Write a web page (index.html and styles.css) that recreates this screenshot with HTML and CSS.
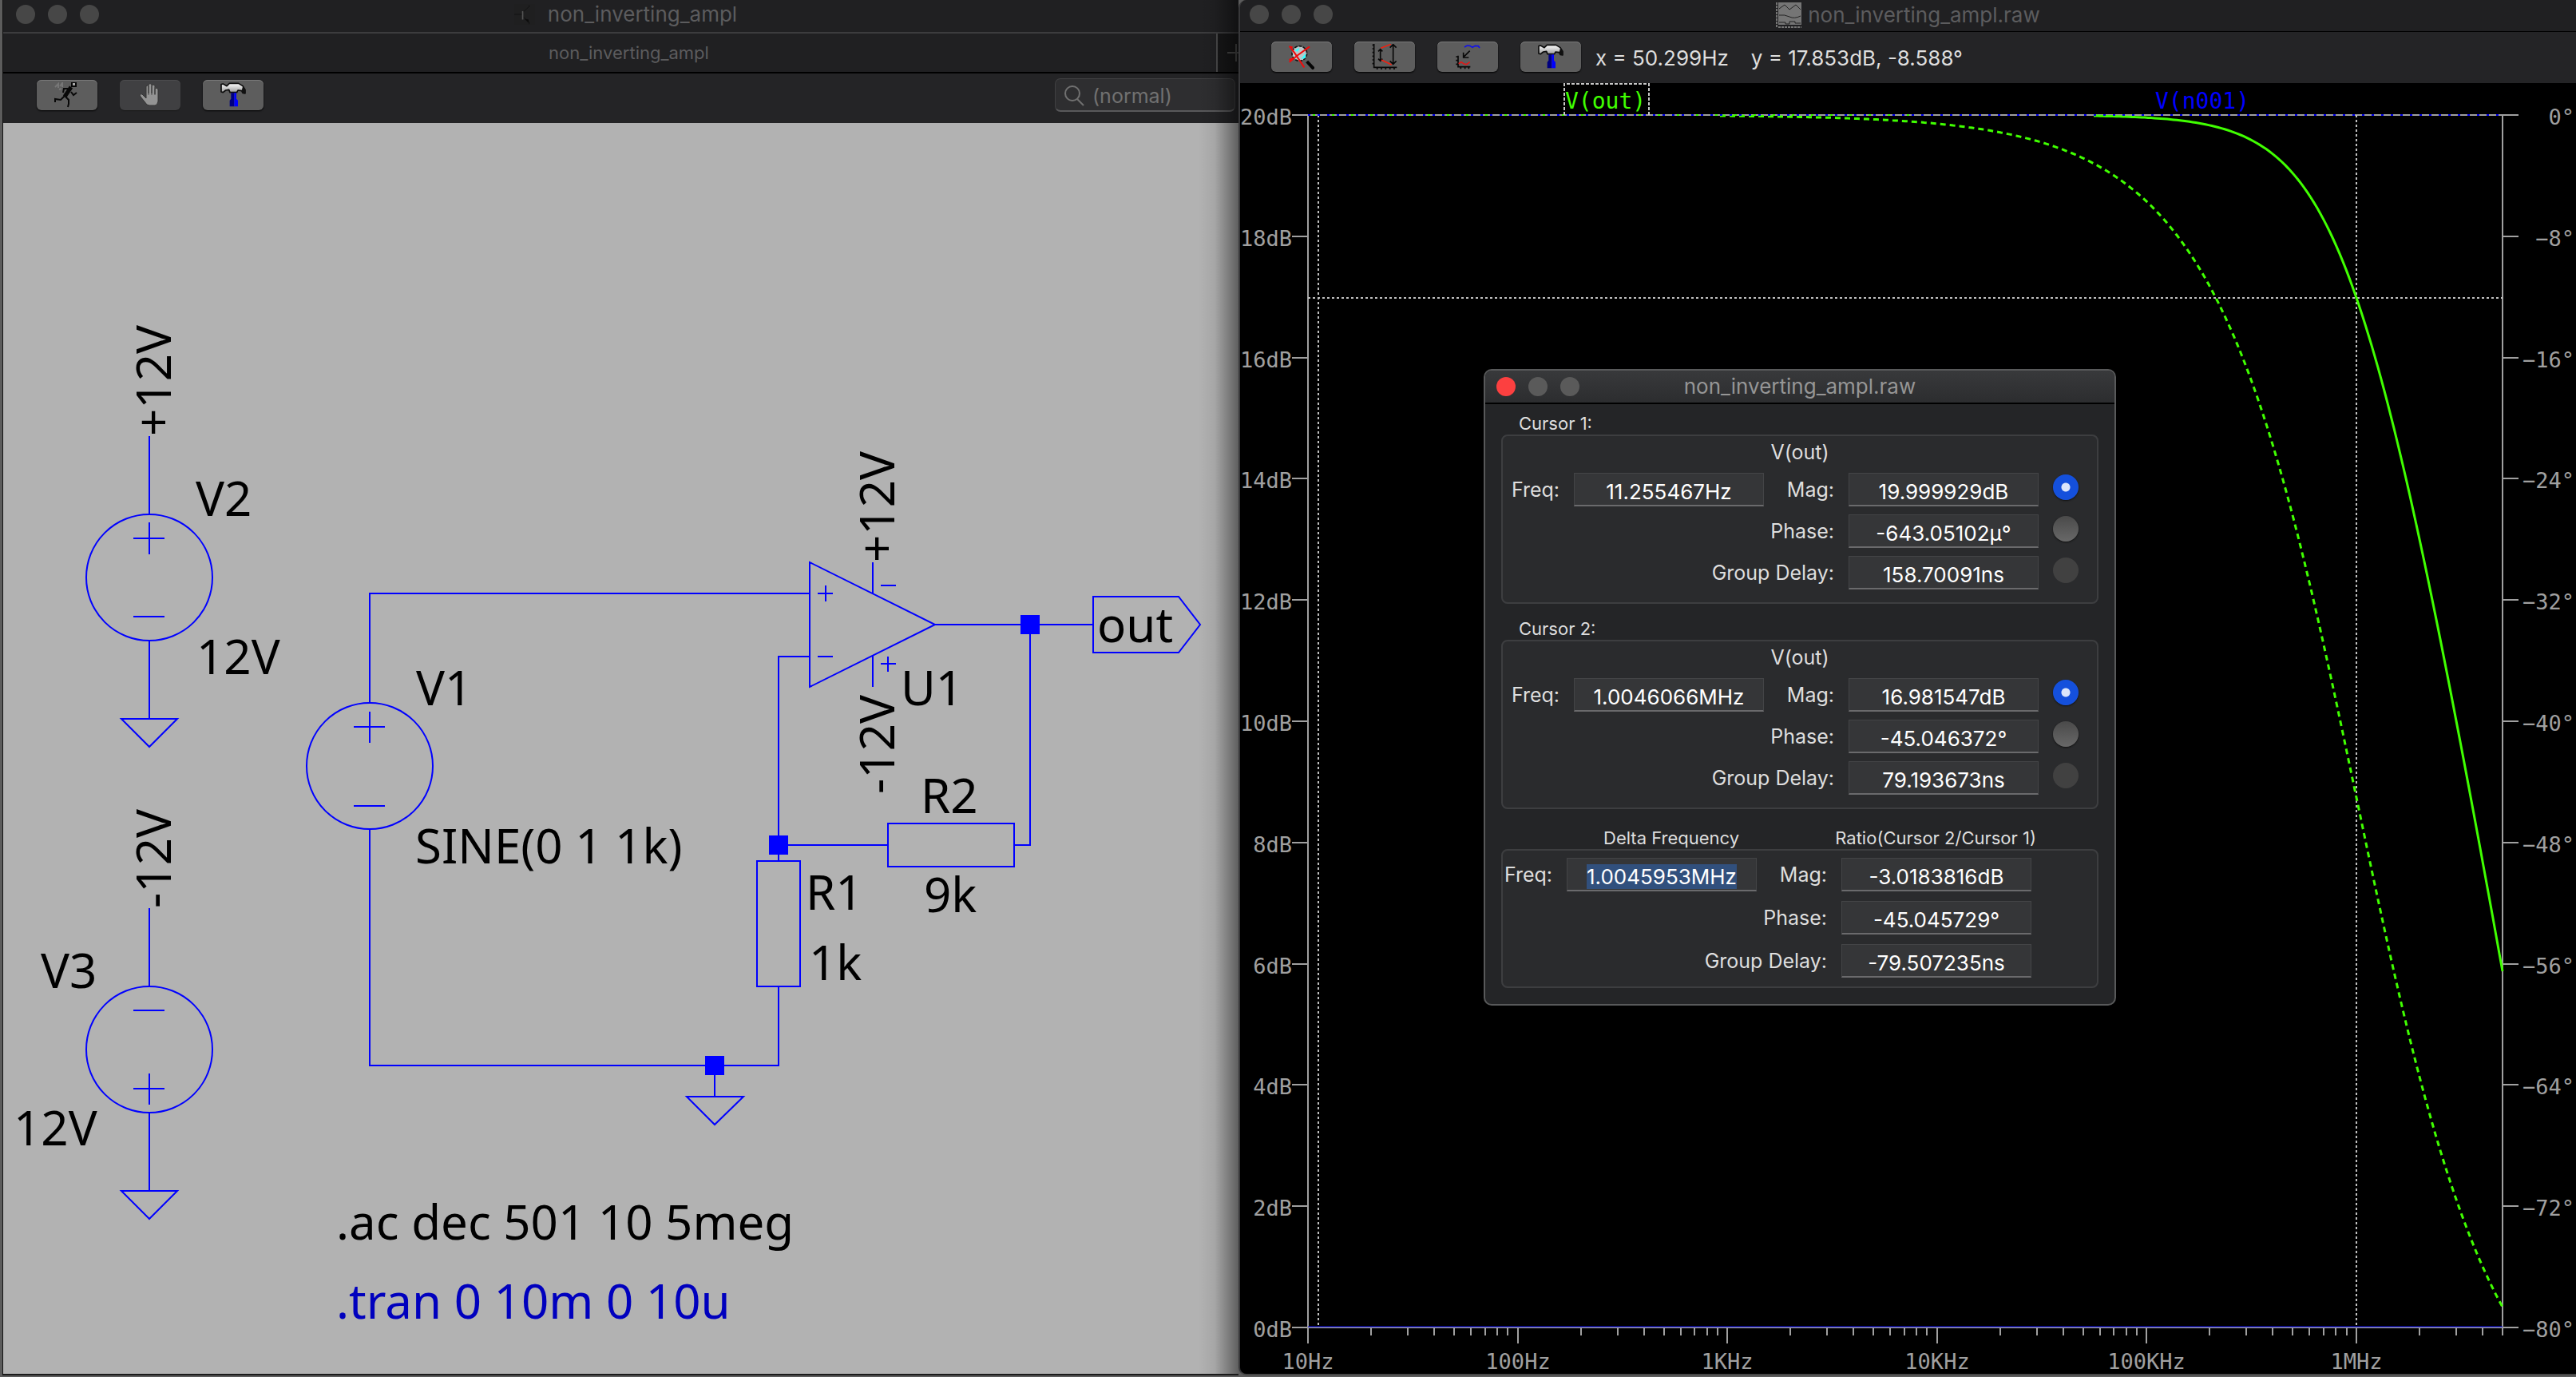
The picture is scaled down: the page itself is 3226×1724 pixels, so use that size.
FILE: index.html
```html
<!DOCTYPE html>
<html lang="en">
<head>
<meta charset="utf-8">
<title>non_inverting_ampl</title>
<link rel="stylesheet" href="styles.css">
</head>
<body>
<svg class="defs" aria-hidden="true">
  <defs>
    <linearGradient id="steel" x1="0" y1="0" x2="0" y2="1">
      <stop offset="0" stop-color="#ffffff"/><stop offset="1" stop-color="#909090"/>
    </linearGradient>
    <symbol id="icon-hammer" viewBox="0 0 96 96">
      <path d="M3 8 L10 6 L24 14 L34 4 L68 4 L84 14 L93 28 L93 42 L84 40 L80 32 L66 30 L62 38 L36 38 L32 28 L20 30 L10 38 L3 36 Z" fill="url(#steel)" stroke="#0c0c0c" stroke-width="5" stroke-linejoin="round"/>
      <path d="M84 16 L93 28 V42 L84 40 L80 32" fill="#111"/>
      <path d="M40 40 H52 V91 H35 V68 L40 62 Z" fill="#000080"/>
      <path d="M52 40 H60 V62 L66 68 V91 H52 Z" fill="#0000ff"/>
    </symbol>
  </defs>
</svg>
<main class="desktop">

  <section class="window schematic-window" aria-label="Schematic">
    <header class="titlebar">
      <div class="lights"><i></i><i></i><i></i></div>
      <svg class="doc-icon" viewBox="0 0 32 32"><rect width="32" height="32" fill="#1f1f20"/><path d="M0 16H13M23 2V4L14 12M14 20L23 28V31" fill="none" stroke="#101010" stroke-width="1"/><path d="M16 23l6 1v5z" fill="#0c0c0c"/><path d="M13 11V24" stroke="#555" stroke-width="2"/></svg>
      <h1 class="title">non_inverting_ampl</h1>
    </header>
    <nav class="tabs">
      <span class="tab">non_inverting_ampl</span>
      <button class="add-tab" aria-label="New tab"><svg viewBox="0 0 26 26"><path d="M13 2V24M2 13H24" stroke="#4a4a4a" stroke-width="2"/></svg></button>
    </nav>
    <div class="toolbar schematic-tools">
      <button class="tool" aria-label="Run"><svg viewBox="0 0 32 32" fill="none" stroke="#080808" stroke-width="2"><path d="M22 0H27V5H22Z" fill="#aaa"/><path d="M21 6L13 18" stroke-width="5"/><path d="M17 8L12 8L11 13M21 12L24 16L28 13M13 17L8 22L1 21V25M14 18L18 22V27L17 31"/><path d="M1 6L5 2V7M7 5L10 1V6M6 9L9 8" stroke="#777"/></svg></button>
      <button class="tool tool-off" aria-label="Stop" disabled><svg viewBox="0 0 32 32"><path d="M12 28L4 18Q2 14 6 15L11 20V5Q12 3 14 5V14V3Q16 0 18 3V14V4Q20 2 22 4V15V8Q25 6 26 9V24Q25 29 22 29H15Z" fill="#949494" stroke="#343434" stroke-width="1"/><path d="M14 5V16M18 4V16M22 6V16" stroke="#505050" stroke-width="1"/></svg></button>
      <button class="tool" aria-label="Control panel"><svg><use href="#icon-hammer"/></svg></button>
      <label class="search">
        <svg viewBox="0 0 26 26" fill="none" stroke="#717171" stroke-width="2"><circle cx="11" cy="10" r="9"/><path d="M17 17L25 25"/></svg>
        <input type="search" placeholder="(normal)" aria-label="Simulation mode">
      </label>
    </div>
    <svg class="schematic" viewBox="4 154 1547 1566" role="img" aria-label="Non-inverting amplifier">
      <g class="wire">
        <path d="M187 546V644M187 802V900H222L187 935L152 900H187M167 674H206M187 654V694M167 772H206"/><circle cx="187" cy="723" r="79"/>
        <path d="M187 1137V1235M187 1393V1491H222L187 1526L152 1491H187M167 1265H206M167 1363H206M187 1344V1383"/><circle cx="187" cy="1314" r="79"/>
        <path d="M463 881V743H1014M463 1038V1334H975V1235M443 910H482M463 891V930M443 1009H482"/><circle cx="463" cy="959" r="79"/>
        <path d="M1014 704V860L1171 782ZM1024 743H1043M1034 733V753M1024 822H1043M1093 704V743M1093 821V860M1103 733H1122M1103 831H1122M1112 822V841"/>
        <path d="M1171 782H1369M1369 747H1476L1503 782L1476 817H1369ZM1290 782V1058H1270M1112 1031H1270V1085H1112ZM1112 1058H975V822H1014M975 1058V1078M948 1078H1002V1235H948Z"/>
        <path d="M895 1334V1373H931L895 1408L860 1373H895"/>
      </g>
      <path class="node" d="M1278 770h24v24h-24zM963 1046h24v24h-24zM883 1322h24v24h-24z"/>
      <g class="label">
        <text x="245" y="646">V2</text><text x="246" y="844">12V</text>
        <text x="521" y="883">V1</text><text x="520" y="1081">SINE(0 1 1k)</text>
        <text x="51" y="1237">V3</text><text x="17" y="1434">12V</text>
        <text x="1128" y="883">U1</text><text x="1374" y="804">out</text>
        <text x="1153" y="1018">R2</text><text x="1157" y="1142">9k</text>
        <text x="1009" y="1139">R1</text><text x="1013" y="1227">1k</text>
        <text x="421" y="1552">.ac dec 501 10 5meg</text>
        <text class="comment" x="421" y="1651">.tran 0 10m 0 10u</text>
        <text transform="translate(214 546) rotate(-90)">+12V</text>
        <text transform="translate(214 1137) rotate(-90)">-12V</text>
        <text transform="translate(1120 704) rotate(-90)">+12V</text>
        <text transform="translate(1120 994) rotate(-90)">-12V</text>
      </g>
    </svg>
  </section>

  <section class="window plot-window" aria-label="Waveforms">
    <header class="titlebar">
      <div class="lights"><i></i><i></i><i></i></div>
      <svg class="doc-icon" viewBox="0 0 32 32"><path fill="#757575" d="M3 0H32V28H3Z"/><path d="M1 0V32M3 31H32" stroke="#757575" stroke-width="2" stroke-dasharray="3 1"/><path d="M4 8L11 3L17 9L25 3L31 9M4 16Q11 15 17 18T31 17M4 25H12V27H17V24H24V26H31" fill="none" stroke="#222"/></svg>
      <h1 class="title">non_inverting_ampl.raw</h1>
    </header>
    <div class="toolbar plot-tools">
      <button class="tool" aria-label="Zoom to fit"><svg viewBox="0 0 96 96"><path d="M68 66L94 94" stroke="#050505" stroke-width="12"/><circle cx="40" cy="36" r="28" fill="#bcc6c8" stroke="#151515" stroke-width="5" stroke-dasharray="12 4"/><path d="M22 24L40 14L34 30ZM46 56L64 34L62 54Z" fill="#3ff"/><path d="M2 8L22 34L58 88M2 68L34 42L78 10M4 12H14M2 60L16 54" fill="none" stroke="#f00b0b" stroke-width="6"/></svg></button>
      <button class="tool" aria-label="Autorange"><svg viewBox="0 0 96 96" fill="none" stroke="#080808" stroke-width="5"><path d="M8 0V88H94"/><path d="M2 4H8M2 18H8M2 32H8M2 46H8M2 60H8M2 74H8M20 88V96M36 88V96M52 88V96M68 88V96M84 88V96M32 22V62M24 28L32 20L40 28M24 56L32 64L40 56M80 4V74M68 14L80 2L92 14M68 64L80 76L92 64"/><path d="M34 16L72 1M36 60L74 78" stroke="#f02010"/></svg></button>
      <button class="tool" aria-label="Add trace"><svg viewBox="0 0 96 96" fill="none" stroke="#080808" stroke-width="5"><path d="M12 44V86H58M4 48H12M4 62H12M4 76H12M22 86V94M38 86V94M52 86V94M56 26L32 50M32 32V51H52"/><path d="M36 12L46 6L56 7L66 13L76 7L88 8L93 15" stroke="#1212e8"/><path d="M14 74L24 68L34 75L44 77L56 68" stroke="#e01818"/></svg></button>
      <button class="tool" aria-label="Control panel"><svg><use href="#icon-hammer"/></svg></button>
      <output class="readout"><span>x = 50.299Hz</span><span>y = 17.853dB, -8.588°</span></output>
    </div>
    <svg class="plot" id="plot" viewBox="1553 104 1673 1616" role="img" aria-label="Bode plot"></svg>

    <form class="dialog" aria-label="Cursor readout">
      <header class="dialog-title">
        <div class="lights"><i class="close"></i><i></i><i></i></div>
        <h2 class="title">non_inverting_ampl.raw</h2>
      </header>
      <div class="dialog-body">
        <h3 class="caption">Cursor 1:</h3>
        <fieldset class="group">
          <p class="trace">V(out)</p>
          <label class="key" for="f1">Freq:</label><input class="value" id="f1" value="11.255467Hz">
          <label class="key" for="m1">Mag:</label><input class="value" id="m1" value="19.999929dB">
          <input class="radio" type="radio" name="c1" aria-label="Magnitude 1" checked>
          <label class="key wide" for="p1">Phase:</label><input class="value" id="p1" value="-643.05102µ°">
          <input class="radio" type="radio" name="c1" aria-label="Phase 1">
          <label class="key wide" for="g1">Group Delay:</label><input class="value" id="g1" value="158.70091ns">
          <input class="radio" type="radio" name="c1" aria-label="Group delay 1" disabled>
        </fieldset>
        <h3 class="caption">Cursor 2:</h3>
        <fieldset class="group">
          <p class="trace">V(out)</p>
          <label class="key" for="f2">Freq:</label><input class="value" id="f2" value="1.0046066MHz">
          <label class="key" for="m2">Mag:</label><input class="value" id="m2" value="16.981547dB">
          <input class="radio" type="radio" name="c2" aria-label="Magnitude 2" checked>
          <label class="key wide" for="p2">Phase:</label><input class="value" id="p2" value="-45.046372°">
          <input class="radio" type="radio" name="c2" aria-label="Phase 2">
          <label class="key wide" for="g2">Group Delay:</label><input class="value" id="g2" value="79.193673ns">
          <input class="radio" type="radio" name="c2" aria-label="Group delay 2" disabled>
        </fieldset>
        <div class="captions"><h3>Delta Frequency</h3><h3>Ratio(Cursor 2/Cursor 1)</h3></div>
        <fieldset class="group delta">
          <label class="key" for="f3">Freq:</label><input class="value" id="f3" value="1.0045953MHz">
          <label class="key" for="m3">Mag:</label><input class="value" id="m3" value="-3.0183816dB">
          <label class="key wide" for="p3">Phase:</label><input class="value" id="p3" value="-45.045729°">
          <label class="key wide" for="g3">Group Delay:</label><input class="value" id="g3" value="-79.507235ns">
        </fieldset>
      </div>
    </form>
  </section>
</main>
<script src="plot.js"></script>
</body>
</html>
```
FILE: styles.css
```css
* { box-sizing: border-box; }
body {
  margin: 0;
  background: #5c5c5c;
  color: #dedede;
  font-family: Inter, "Liberation Sans", sans-serif;
  font-size: 25px;
}
h1, h2, h3, p { margin: 0; font-size: inherit; font-weight: 400; }
button, input { font: inherit; color: inherit; }
.defs { position: absolute; width: 0; height: 0; }

.desktop {
  display: grid;
  grid-template-columns: minmax(0, 1547fr) minmax(0, 1675fr);
  align-items: start;
  padding-left: 4px;
}
.window { position: relative; background: #242426; }
.schematic-window { border-bottom: 2px solid #1a1a1a; box-shadow: -1px 0 #111; }
.plot-window {
  border-left: 2px solid #38383a;
  border-bottom: 2px solid #444;
  border-radius: 10px 0 0 10px;
  overflow: hidden;
}
.schematic-window::after {
  content: "";
  position: absolute;
  inset: 0 0 0 auto;
  width: 50px;
  background: linear-gradient(to right, #0000, #0001 40%, #0007);
}

/* title bars */
.titlebar, .dialog-title {
  position: relative;
  display: flex;
  align-items: center;
  justify-content: center;
  gap: 16px;
}
.titlebar { height: 40px; padding-bottom: 4px; background: #202022; }
.schematic-window .titlebar { padding-left: 12px; }
.plot-window .titlebar { gap: 8px; border-bottom: 1px solid #000; padding-bottom: 2px; }
.title { color: #5c5c5e; font-size: 26px; line-height: 32px; }
.lights { position: absolute; left: 16px; top: 6px; display: flex; gap: 16px; }
.lights i { width: 24px; height: 24px; border-radius: 50%; background: #474747; }
.plot-window .titlebar .lights { left: 12px; }
.doc-icon { width: 32px; height: 32px; }
.schematic-window .doc-icon { width: 26px; }

.tabs { display: flex; height: 52px; border-top: 2px solid #3c3c3e; border-bottom: 2px solid #000; background: #202022; }
.tab { flex: 1; padding-left: 48px; text-align: center; font-size: 22px; line-height: 48px; color: #5c5c5e; }
.add-tab { width: 28px; padding: 0; border: 0; border-left: 2px solid #4a4a4a; background: #171718; overflow: hidden; }
.add-tab svg { display: block; width: 26px; height: 26px; margin-left: 10px; }

/* toolbars */
.toolbar { display: flex; align-items: center; }
.schematic-tools { height: 62px; gap: 28px; padding: 0 4px 8px 42px; }
.plot-tools { height: 64px; gap: 28px; padding: 0 39px 2px; }
.tool {
  display: grid;
  place-items: center;
  width: 76px;
  height: 38px;
  padding: 0;
  border: 0;
  border-radius: 6px;
  background: #5d5d5d;
  box-shadow: inset 0 1px #7a7a7a, 0 1px 2px #000;
}
.tool svg { width: 32px; height: 32px; }
.tool-off { background: #404042; box-shadow: inset 0 1px #4c4c4e, 0 1px 1px #1a1a1a; }
.search {
  display: flex;
  align-items: center;
  gap: 10px;
  width: 226px;
  height: 42px;
  margin-left: auto;
  padding: 2px 10px 0;
  border: 1px solid #404042;
  border-bottom: 2px solid #59595b;
  border-radius: 7px;
  background: #2e2e30;
}
.search svg { flex: none; width: 26px; height: 26px; }
.search input { width: 100%; min-width: 0; padding: 0; border: 0; outline: 0; background: none; font-size: 25px; }
.search input::placeholder { color: #717171; }
.readout { display: flex; gap: 28px; margin-left: -10px; padding-top: 2px; white-space: pre; font-size: 26px; }

/* drawing area */
.schematic, .plot { display: block; width: 100%; height: auto; }
.schematic { background: #b2b2b2; }
.plot { background: #000; }
.wire { fill: none; stroke: #00f; stroke-width: 2px; }
.node { fill: #00f; }
.label { font: 60px "Noto Sans", sans-serif; fill: #000; }
.label .comment { fill: #0000be; }

.axis { fill: none; stroke: #a0a0a0; stroke-width: 2px; }
.cursor { fill: none; stroke: #c0c0c0; stroke-width: 2px; stroke-dasharray: 3 3; }
.tick-label { font: 27px "DejaVu Sans Mono", monospace; fill: #a0a0a0; }
.trace-name { font: 28px "DejaVu Sans Mono", monospace; }
.mid { text-anchor: middle; }
.end { text-anchor: end; }
.select-box { fill: none; stroke: #c8c8c8; stroke-width: 2px; stroke-dasharray: 4 2; }
.green { fill: none; stroke: #40ff00; stroke-width: 3px; }
.blue { fill: none; stroke: #0000f0; stroke-width: 1px; }
.dashed { stroke-dasharray: 7 5; }
.dots { stroke-width: 2px; stroke-dasharray: 3 9; }
.green.dots { stroke-dasharray: 3 21; }
.name-green { fill: #40ff00; }
.name-blue { fill: #0000ff; }

/* floating cursor dialog */
.dialog {
  position: absolute;
  left: 305px;
  top: 462px;
  width: 792px;
  border: 2px solid #58595a;
  border-radius: 10px;
  background: #242527;
  overflow: hidden;
}
.dialog-title { height: 42px; border-bottom: 2px solid #000; background: linear-gradient(#38393b, #2c2d2f); }
.dialog-title .title { color: #969696; }
.dialog-title .lights { left: 14px; top: 8px; }
.dialog-title i { background: #5a5a5a; }
.dialog-title .close { background: #fc4040; }
.dialog-body { padding: 10px 20px 20px; }
.caption, .captions { height: 28px; font-size: 22px; line-height: 28px; }
.caption { padding-left: 22px; }
.captions { display: flex; justify-content: space-between; padding: 0 78px 0 128px; }
.group {
  display: grid;
  grid-template-columns: 71px 238px 70px 238px 1fr;
  gap: 10px 18px;
  align-items: center;
  align-content: start;
  height: 212px;
  margin: 0 0 17px;
  padding: 4px 0 0;
  border: 2px solid #3d3e40;
  border-radius: 8px;
  background: #2a2b2d;
}
.captions { margin-top: 22px; }
.delta { grid-template-columns: 62px 238px 70px 238px; row-gap: 12px; height: 174px; margin-bottom: 0; padding-top: 9px; }
.trace { grid-column: 1 / -1; height: 32px; line-height: 32px; text-align: center; }
.key { justify-self: end; white-space: nowrap; line-height: 32px; }
.wide { grid-column: 1 / 4; }
.value {
  width: 100%;
  height: 42px;
  padding: 6px 0 0;
  border: 1px solid #434446;
  border-bottom: 2px solid #6a6a6c;
  border-radius: 0;
  outline: 0;
  background: #353638;
  color: #fff;
  font-size: 26px;
  text-align: center;
}
.value::selection { background: #31507d; color: #fff; }
.radio {
  appearance: none;
  width: 32px;
  height: 32px;
  margin: 0 0 6px;
  border-radius: 50%;
  background: linear-gradient(#4a4a4a, #686868);
  box-shadow: 0 1px 2px #111;
}
.radio:checked { background: radial-gradient(circle, #dce6fb 5px, #1450dc 6px); }
.radio:disabled { background: #414141; box-shadow: none; }
```
FILE: plot.js
```js
// Bode plot of the closed loop: one pole at FC, 20 dB at low frequency.
const GAIN = 20, FC = 1003000;
const LEFT = 1638, RIGHT = 3134, TOP = 144, BOTTOM = 1662;
const DECADE = (RIGHT - LEFT) / Math.log10(5e5);
const fx = f => LEFT + Math.log10(f / 10) * DECADE;
const magY = db => BOTTOM - db / 20 * (BOTTOM - TOP);
const phaseY = deg => TOP - deg / 80 * (BOTTOM - TOP);
const line = (cls, d) => `<path class="${cls}" d="${d}"/>`;
const text = (cls, x, y, s) => `<text class="${cls}" x="${x}" y="${y}">${s}</text>`;
let out = line('axis', `M${LEFT} ${TOP}V${BOTTOM + 20}M${RIGHT} ${TOP}V${BOTTOM + 10}`);

let ticks = '';
for (let i = 0; i <= 10; i++) {
  const y = Math.round(magY(20 - 2 * i));
  ticks += `M1618 ${y}H${LEFT}M${RIGHT} ${y}H3154`;
  out += text('tick-label end', 1618, y + 12, `${20 - 2 * i}dB`);
  out += text('tick-label end', 3224, y + 12, i ? `−${8 * i}°` : '0°');
}
for (let d = 1; d <= 6; d++) {
  for (let n = 1; n < 10; n++) {
    const f = n * 10 ** d;
    if (f > 5e6) break;
    ticks += `M${Math.round(fx(f))} ${BOTTOM}v${n === 1 ? 20 : 10}`;
  }
}
ticks += `M${LEFT} ${TOP}H${RIGHT}M${LEFT} ${BOTTOM}H${RIGHT}`;
out += line('axis', ticks);
['10Hz', '100Hz', '1KHz', '10KHz', '100KHz', '1MHz'].forEach((s, i) => {
  out += text('tick-label mid', Math.round(fx(10 ** (i + 1))), 1714, s);
});

const cy = Math.round(magY(16.981547));
out += line('cursor', `M${Math.round(fx(11.255467))} ${TOP}V${BOTTOM}M${Math.round(fx(1004606.6))} ${TOP}V${BOTTOM}M${LEFT} ${cy}H${RIGHT}`);

let mag = '', phase = '';
for (let x = LEFT; x <= RIGHT; x += 4) {
  const r = 10 * 10 ** ((x - LEFT) / DECADE) / FC;
  const my = magY(GAIN - 10 * Math.log10(1 + r * r));
  const py = phaseY(-Math.atan(r) * 180 / Math.PI);
  if (my > TOP + 1) mag += `${mag ? 'L' : 'M'}${x} ${my.toFixed(1)}`;
  if (py > TOP + 1) phase += `${phase ? 'L' : 'M'}${x} ${py.toFixed(1)}`;
}
out += line('green', mag) + line('green dashed', phase);
out += line('blue', `M${LEFT} ${BOTTOM - 1}H${RIGHT}`) + line('blue dots', `M${LEFT} ${TOP}H${RIGHT}`);
out += line('green dots', `M${LEFT + 6} ${TOP}H2400`);
out += line('select-box', 'M1959 144V105H2065V144');
out += text('trace-name name-green', 1960, 136, 'V(out)') + text('trace-name name-blue', 2699, 136, 'V(n001)');
document.getElementById('plot').innerHTML = out;

const delta = document.getElementById('f3');
delta.focus();
delta.select();
```
